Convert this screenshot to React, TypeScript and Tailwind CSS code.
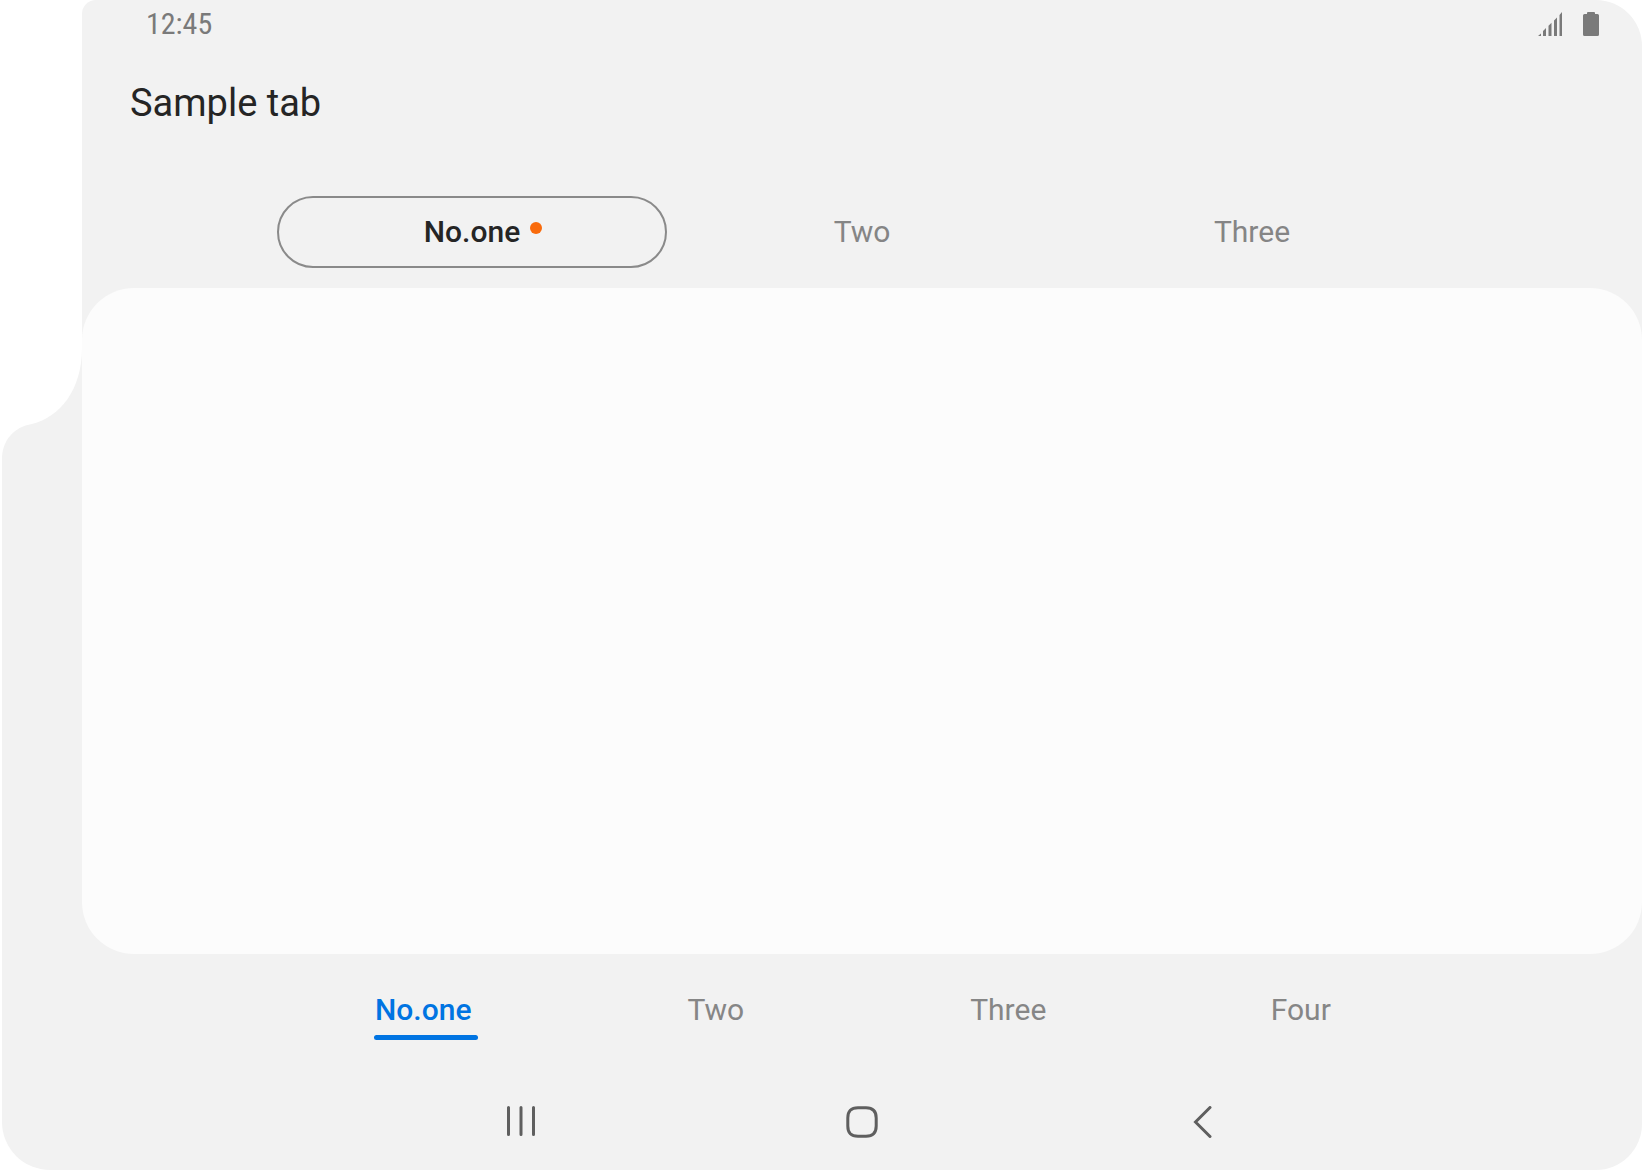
import { useState } from "react";

const topTabs = ["No.one", "Two", "Three"];
const bottomTabs = ["No.one", "Two", "Three", "Four"];

function StatusBar() {
  return (
    <div className="flex h-12 items-center justify-between pl-16 pr-[43px] text-[#7a7a7a]">
      <time className="font-['Roboto_Condensed','Roboto',sans-serif] text-[30px] leading-10">12:45</time>
      <div className="flex items-center gap-5">
        <svg width="25" height="24" viewBox="0 0 25 24" fill="currentColor" aria-label="Signal">
          <path d="M0 24L3 21.4V24ZM5 24V19L8 16V24ZM10.500 24V13.800L13.500 10.800V24ZM16 24V8.500L19 5.500V24ZM21.500 24V3L24 0V24Z" />
        </svg>
        <svg width="16" height="24" viewBox="0 0 16 24" fill="currentColor" aria-label="Battery">
          <path d="M5 0H11Q12 0 12 1V2H14.500Q16 2 16 3.500V22.500Q16 24 14.500 24H1.500Q0 24 0 22.500V3.500Q0 2 1.500 2H4V1Q4 0 5 0Z" />
        </svg>
      </div>
    </div>
  );
}

function TopTabs() {
  const [active, setActive] = useState(0);
  return (
    <div role="tablist" className="mx-auto grid w-3/4 grid-cols-3">
      {topTabs.map((label, i) => (
        <button
          key={label}
          type="button"
          role="tab"
          aria-selected={active === i}
          onClick={() => setActive(i)}
          className={
            active === i
              ? "h-[72px] rounded-full border-2 border-[#8a8a8a] font-medium text-[#252525]"
              : "h-[72px] rounded-full border-2 border-transparent text-[#858585]"
          }
        >
          <span className="relative">
            {label}
            {i === 0 && <span className="absolute -right-[22px] top-2 size-3 rounded-full bg-[#f96b0c]" />}
          </span>
        </button>
      ))}
    </div>
  );
}

function BottomTabs() {
  const [active, setActive] = useState(0);
  return (
    <div role="tablist" className="mx-auto grid w-3/4 grid-cols-4">
      {bottomTabs.map((label, i) => (
        <button
          key={label}
          type="button"
          role="tab"
          aria-selected={active === i}
          onClick={() => setActive(i)}
          className={active === i ? "h-[72px] font-medium text-[#0074e2]" : "h-[72px] text-[#868686]"}
        >
          <span className="relative">
            {label}
            {active === i && (
              <span className="absolute -bottom-[13px] -left-px -right-[7px] h-[5px] rounded-full bg-[#0074e2]" />
            )}
          </span>
        </button>
      ))}
    </div>
  );
}

function NavBar() {
  const button = "flex h-12 items-center justify-center";
  return (
    <nav className="mx-auto grid w-[65.5%] grid-cols-3 text-[#5f5f5f]">
      <button type="button" aria-label="Recents" className={button}>
        <svg width="32" height="32" viewBox="0 0 32 32" fill="none" stroke="currentColor" strokeWidth="3" strokeLinecap="round">
          <path d="M3.500 1.500V28.500M16 1.500V28.500M28.500 1.500V28.500" />
        </svg>
      </button>
      <button type="button" aria-label="Home" className={button}>
        <svg width="32" height="32" viewBox="0 0 32 32" fill="none" stroke="currentColor" strokeWidth="3">
          <path d="M12 1.800H20C27 1.800 30.200 5 30.200 12V20C30.200 27 27 30.200 20 30.200H12C5 30.200 1.800 27 1.800 20V12C1.800 5 5 1.800 12 1.800Z" />
        </svg>
      </button>
      <button type="button" aria-label="Back" className={button}>
        <svg width="32" height="32" viewBox="0 0 32 32" fill="none" stroke="currentColor" strokeWidth="3" strokeLinecap="round">
          <path d="M23 1.500L8.500 16L23 30.500" />
        </svg>
      </button>
    </nav>
  );
}

export default function App() {
  return (
    <div className="flex min-h-screen bg-white font-['Roboto',sans-serif] text-[30px] leading-10">
      <aside aria-hidden="true" className="flex w-[82px] shrink-0 flex-col pl-0.5 pt-[340px]">
        <svg width="80" height="120" viewBox="0 0 80 120" className="block fill-[#f2f2f2]">
          <path d="M80 0V120H0C0 100 12 87 30 84C58 77 80 50 80 8Z" />
        </svg>
        <div className="flex-1 rounded-bl-[48px] bg-[#f2f2f2]" />
      </aside>
      <div className="flex min-w-0 flex-1 flex-col rounded-tl-[14px] rounded-r-[46px] bg-[#f2f2f2]">
        <StatusBar />
        <h1 className="px-12 pt-8 text-[38px] leading-[46px] text-[#252525]">Sample tab</h1>
        <div className="pb-5 pt-[70px]">
          <TopTabs />
        </div>
        <main className="min-h-80 flex-1 rounded-[52px] bg-[#fcfcfc]" />
        <div className="pt-5">
          <BottomTabs />
        </div>
        <div className="pb-6 pt-13">
          <NavBar />
        </div>
      </div>
    </div>
  );
}
